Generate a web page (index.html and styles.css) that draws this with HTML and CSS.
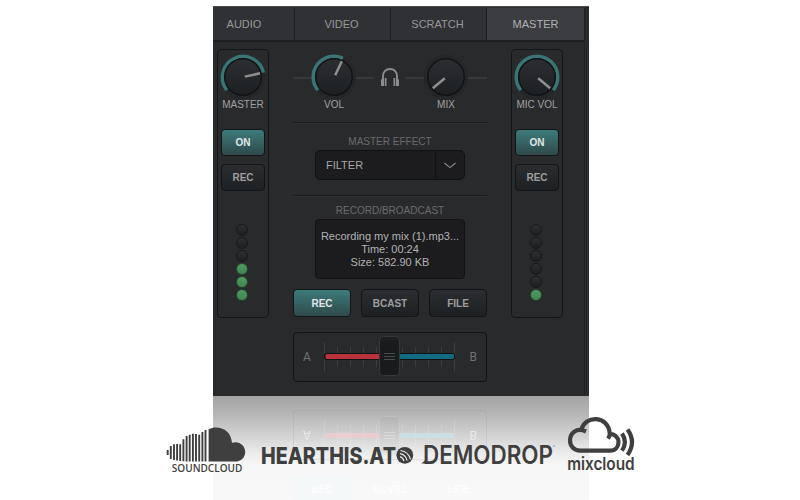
FILE: index.html
```html
<!DOCTYPE html>
<html lang="en">
<head>
<meta charset="utf-8">
<title>Mixer master panel</title>
<link rel="stylesheet" href="styles.css">
</head>
<body>
<svg class="defs" width="0" height="0">
  <defs>
    <linearGradient id="cap" x1="0" y1="0" x2="0" y2="1">
      <stop offset="0" stop-color="#2d2e31"/><stop offset="1" stop-color="#1c2023"/>
    </linearGradient>
  </defs>
</svg>
<main class="stage">
  <section class="panel">
    <nav class="tabs">
      <span class="tab first">AUDIO</span>
      <span class="tab">VIDEO</span>
      <span class="tab">SCRATCH</span>
      <span class="tab active">MASTER</span>
    </nav>
    <div class="content">
      <div class="channel">
        <svg class="knob" viewBox="-25 -23 50 46">
          <circle r="20.5" class="track"/>
          <path class="arc" d="M-16 13A20.6 20.6 0 1 1 20.2 -4.4"/>
          <circle r="18.3" class="cap"/>
          <path class="tick" d="M1.8 -.4L17 -3.7"/>
        </svg>
        <span class="label">MASTER</span>
        <span class="btn on">ON</span>
        <span class="btn">REC</span>
        <div class="leds"><i></i><i></i><i></i><i class="lit"></i><i class="lit"></i><i class="lit"></i></div>
      </div>
      <div class="center">
        <div class="monitor">
          <hr class="l1">
          <div class="dial vol">
            <svg class="knob" viewBox="-25 -23 50 46">
              <circle r="20.5" class="track"/>
              <path class="arc" d="M-16 13A20.6 20.6 0 0 1 8.9 -18.6"/>
              <circle r="18.3" class="cap"/>
              <path class="tick" d="M1.2 -1.8L7.8 -15.8"/>
            </svg>
            <span class="label">VOL</span>
          </div>
          <hr class="l2">
          <svg class="phones" viewBox="0 0 18 18">
            <path d="M2 11V8.500C2 3.800 5 1 9 1s7 2.800 7 7.500V11" fill="none" stroke="#8d8d8e" stroke-width="1.900"/>
            <path d="M0 11.500l3.200-1.500v8H0zM18 11.500l-3.200-1.500v8h3.200z" fill="#8d8d8e"/>
            <path d="M4.700 10v8M13.300 10v8" stroke="#8d8d8e" stroke-width="1.600"/>
          </svg>
          <hr class="l3">
          <div class="dial">
            <svg class="knob" viewBox="-25 -23 50 46">
              <circle r="20.500" class="track"/>
              <circle r="18.300" class="cap"/>
              <path class="tick" d="M-1.200 1.300L-13.200 11.200"/>
            </svg>
            <span class="label">MIX</span>
          </div>
          <hr class="l4">
        </div>
        <div class="group effect">
          <span class="heading">MASTER EFFECT</span>
          <div class="select">
            <span>FILTER</span>
            <b><svg viewBox="0 0 12 7"><path d="M.5 1L6 5.600 11.500 1" fill="none" stroke="#8a8a8b" stroke-width="1.100"/></svg></b>
          </div>
        </div>
        <div class="group record">
          <span class="heading">RECORD/BROADCAST</span>
          <div class="display">Recording my mix (1).mp3...<br>Time: 00:24<br>Size: 582.90 KB</div>
        </div>
        <div class="buttons">
          <span class="btn on">REC</span><span class="btn">BCAST</span><span class="btn">FILE</span>
        </div>
        <div class="fader">
          <span>A</span>
          <svg viewBox="0 0 132 44">
            <path stroke="#3b3c3e" d="M.5 7v30M13.500 12v20M26.500 12v20M39.500 12v20M52.500 12v20M78.500 12v20M91.500 12v20M104.500 12v20M117.500 12v20M130.500 7v30"/>
            <rect x="0" y="18" width="131" height="7" rx="3" fill="#101113"/>
            <rect x="1.500" y="19" width="64" height="5" rx="1.500" fill="#b8333c"/>
            <rect x="65" y="19" width="65" height="5" rx="1.500" fill="#106b83"/>
            <rect x="55.500" y="1.500" width="20" height="39" rx="4" fill="#1d1e21" stroke="#37383b"/>
            <rect x="56.500" y="6" width="18" height="34" rx="3" fill="#191a1c"/>
            <path d="M60 18.500h11M60 21.500h11M60 24.500h11" stroke="#4a4b4d"/>
          </svg>
          <span>B</span>
        </div>
      </div>
      <div class="channel">
        <svg class="knob" viewBox="-25 -23 50 46">
          <circle r="20.500" class="track"/>
          <path class="arc" d="M-16 13A20.600 20.600 0 1 1 16 13"/>
          <circle r="18.300" class="cap"/>
          <path class="tick" d="M1.200 1.300L13.200 11.200"/>
        </svg>
        <span class="label">MIC VOL</span>
        <span class="btn on">ON</span>
        <span class="btn">REC</span>
        <div class="leds"><i></i><i></i><i></i><i></i><i></i><i class="lit"></i></div>
      </div>
    </div>
  </section>

  <section class="mirror">
    <div class="ghost">
      <div class="ghost-buttons"><span class="tint">REC</span><span>BCAST</span><span>FILE</span></div>
      <div class="ghost-fader">
        <span>A</span>
        <svg viewBox="0 0 132 44">
          <path d="M.5 7v30M13.500 12v20M26.500 12v20M39.500 12v20M52.500 12v20M78.500 12v20M91.500 12v20M104.500 12v20M117.500 12v20M130.500 7v30" stroke="#fff" stroke-opacity=".2"/>
          <rect x="1.500" y="19" width="54" height="5" rx="1.500" fill="#f0ccd0"/>
          <rect x="75.500" y="19" width="54.500" height="5" rx="1.500" fill="#cae1e7"/>
          <rect x="55.500" y="1.500" width="20" height="39" rx="4" fill="#777" fill-opacity=".07" stroke="#fff" stroke-opacity=".15"/>
          <path d="M60 18.500h11M60 21.500h11M60 24.500h11" stroke="#fff" stroke-opacity=".35"/>
        </svg>
        <span>B</span>
      </div>
    </div>
  </section>

  <svg class="logos" viewBox="160 410 490 70" fill="#3f3f40">
    <g>
      <path d="M167.700 450v5M170.800 446v13M174 444.300v15.700M177.100 444v16.500M180.200 444.300v16.700M183.400 439.300v22M186.600 436v25.400M189.700 434.700v26.700M192.900 433.700v27.700M196 434v27.400M199.200 434.700v26.700M202.400 432v29.400M205.500 430v31.400" stroke="#3f3f40" stroke-width="1.900"/>
      <path d="M208.600 461.600V429.200C217 424.800 231 428 232 442.800C239 440.300 245.200 445.500 245.200 452C245.200 457.500 241 461.600 235.500 461.600Z"/>
      <text x="171.800" y="472" class="sc" textLength="70.500">SOUNDCLOUD</text>
    </g>
    <g>
      <text x="261" y="464" class="ht" textLength="135" lengthAdjust="spacingAndGlyphs">HEARTHIS.AT</text>
      <circle cx="404.800" cy="455.300" r="8.400"/>
      <path d="M400.500 450.500Q408.500 451.500 410.500 459.500M400 453.600Q405.500 454.500 407.200 460.500M400 456.600Q403 457.500 404 461" fill="none" stroke="#e6e6e6" stroke-width="1.100"/>
    </g>
    <g>
      <text x="423" y="463.600" class="dd" textLength="130" lengthAdjust="spacingAndGlyphs">DEMODROP</text>
      <path d="M421.500 463.600L426 459.500v4.100z"/>
      <path d="M553.300 446h1.600" stroke="#777" stroke-width=".8"/>
    </g>
    <g>
      <g fill="none" stroke="#3f3f40" stroke-width="4.200">
        <path d="M586 431.500C576 427 570 433.500 570 440.300C570 446.500 574.500 450.700 580 450.700H610C615.500 450.700 618.500 446.800 618.500 442.300C618.500 436.500 613.500 433.500 609.500 434.200"/>
        <path d="M581.300 430.300C584.500 414.500 609 415 609.800 434Q609.500 436.500 608 438.600"/>
        <path d="M622 433.500Q627.800 442 622 450.700M627.500 429.500Q636.500 442 627.500 455"/>
      </g>
      <text x="567.200" y="469.700" class="mc" textLength="67.500" lengthAdjust="spacingAndGlyphs">mixcloud</text>
    </g>
  </svg>
</main>
</body>
</html>
```
FILE: styles.css
```css
* { box-sizing: border-box; }
body { margin: 0; background: #fff; font-family: "Liberation Sans", Arial, sans-serif; overflow: hidden; }
.defs { position: absolute; }
.stage { position: relative; width: 800px; height: 500px; padding: 6px 0 0 213px; }

.panel { width: 376px; height: 390px; background: #292a2c; border-top: 1px solid #4b4c4e; }
.tabs {
  display: grid; grid-template-columns: 82px 96px 96px 97px; height: 35px; width: 372px;
  border-top: 1px solid #303133; border-bottom: 2px solid #1e1f21; border-right: 1px solid #1d1e20;
}
.tab {
  display: flex; align-items: center; justify-content: center; padding: 0 2px 1px 0;
  font-size: 11px; color: #98989a; background: #303134; border-right: 1px solid #1d1e20;
}
.tab.first { padding-right: 19px; }
.tab.active { background: #3c3d41; color: #b0b0b2; border-right: 0; padding-right: 0; }

.content { display: flex; height: 354px; width: 372px; padding: 7px 0 0 4px; border-right: 1px solid #202123; }
.channel {
  flex: none; width: 52px; height: 269px; border: 1px solid #141517; border-radius: 4px;
  display: flex; flex-direction: column; align-items: center; padding-top: 4px;
}
.knob { display: block; flex: none; width: 50px; height: 46px; }
.track { fill: none; stroke: #252628; stroke-width: 3.5; }
.arc { fill: none; stroke: #3a7475; stroke-width: 3.8; }
.cap { fill: url(#cap); stroke: #121315; stroke-width: 1.5; }
.tick { stroke: #8f8f90; stroke-width: 2.5; }
.label { font-size: 10px; line-height: 12px; color: #a0a0a1; white-space: nowrap; }
.channel .label { margin: -1px 0 18px; }
.btn {
  display: flex; align-items: center; justify-content: center; width: 44px; height: 27px;
  border: 1px solid #121416; border-radius: 4px; font-size: 10px; font-weight: bold;
  color: #9d9d9e; background: linear-gradient(#2b2d30, #1d2124);
}
.btn.on { color: #e2e6e6; background: linear-gradient(#3d7b7b, #2f494a); }
.channel .btn { flex: none; margin-bottom: 8px; }
.leds { display: flex; flex-direction: column; gap: 1px; margin: 25px 2px 0 0; }
.leds i {
  width: 12px; height: 12px; border-radius: 50%; border: 1px solid #18191b;
  background: linear-gradient(#2e2f31, #1e1f21);
}
.leds .lit { background: linear-gradient(#529a62, #3f8550); border-color: #25482e; }

.center { width: 194px; margin: 0 24px; flex: none; }
.monitor { display: flex; height: 74px; border-bottom: 1px solid #1c1d1f; box-shadow: 0 1px #2e2f31; padding-top: 5px; }
.monitor hr { flex: none; height: 2px; border: 0; margin: 23px 0 0; background: #37383a; }
.l1 { width: 19px; }
.l2 { width: 18px; }
.l3 { width: 19px; }
.l4 { width: 19px; }
.dial { display: flex; flex-direction: column; align-items: center; width: 44px; flex: none; }
.dial .label { margin-top: -1px; }
.phones { flex: none; width: 18px; height: 18px; margin: 14px 6px 0 7px; }
.group { display: flex; flex-direction: column; align-items: center; }
.heading { font-size: 10px; line-height: 12px; color: #6a6a6c; }
.effect { height: 73px; padding-top: 13px; border-bottom: 1px solid #1c1d1f; box-shadow: 0 1px #2e2f31; }
.select {
  display: flex; align-items: center; width: 150px; height: 30px; margin-top: 2px; padding-left: 10px;
  border: 1px solid #111214; border-radius: 5px; background: #1c1c1e; color: #a7a7a8; font-size: 11px;
}
.select b {
  display: flex; align-items: center; justify-content: center; width: 29px; height: 28px;
  margin-left: auto; border-left: 1px solid #111214;
}
.select svg { width: 12px; height: 7px; }
.record { padding-top: 9px; }
.display {
  width: 150px; height: 60px; margin-top: 2px; padding-top: 10px; border: 1px solid #111214; border-radius: 4px;
  background: #1c1c1e; color: #b2b2b3; text-align: center; font-size: 11px; line-height: 13px; white-space: nowrap;
}
.buttons { display: flex; gap: 10px; margin-top: 10px; }
.buttons .btn { width: 58px; height: 28px; }
.fader {
  display: flex; align-items: center; justify-content: space-between; height: 50px; margin-top: 15px;
  padding: 0 9px; border: 1px solid #121315; border-radius: 4px; color: #717173; font: 12px Roboto, sans-serif;
}
.fader svg { width: 132px; height: 44px; flex: none; }

.mirror {
  width: 376px; height: 104px; overflow: hidden;
  background: linear-gradient(#a3a3a3, #b7b7b7 18%, #d5d5d5 40%, #ededed 56%, #f7f7f7 67%, #f8f8f8);
}
.ghost { display: flex; flex-direction: column; width: 194px; height: 108px; margin-left: 80px; transform: scaleY(-1); }
.ghost-buttons { display: flex; gap: 10px; margin-top: 1px; }
.ghost-buttons span {
  display: flex; align-items: center; justify-content: center; width: 58px; height: 28px;
  border-radius: 4px; color: #fdfdfd; font-size: 10px; font-weight: bold;
}
.ghost-buttons .tint { background: #f5f8f8; }
.ghost-fader {
  display: flex; align-items: center; justify-content: space-between; height: 50px; margin-top: 15px;
  padding: 0 9px; border: 1px solid rgba(110, 115, 115, .13); border-radius: 4px;
  color: #e9e9e9; font: 12px Roboto, sans-serif;
}
.ghost-fader svg { width: 132px; height: 44px; flex: none; opacity: .85; }

.logos { position: absolute; left: 160px; top: 410px; width: 490px; height: 70px; }
.sc { font: 600 10px "Open Sans", sans-serif; }
.ht { font: 800 23.4px Inter, sans-serif; }
.dd { font: 600 25px Inter, sans-serif; }
.mc { font: 600 17.5px Inter, sans-serif; }
```
